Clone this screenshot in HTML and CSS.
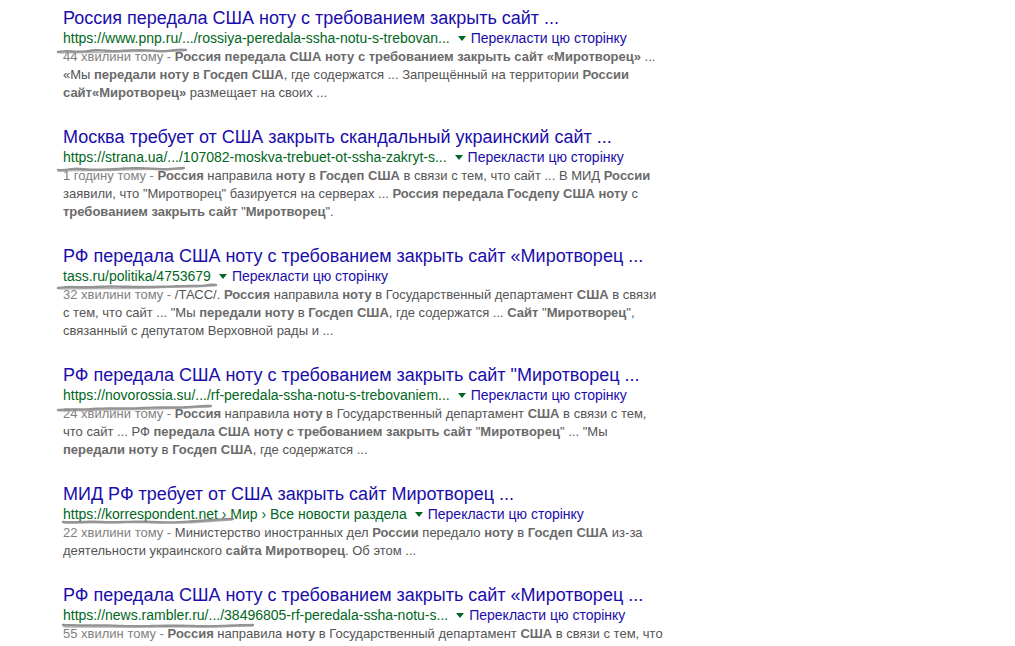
FILE: index.html
```
<html>
	<head>
		<meta charset="utf-8">
		<title> Результати пошуку </title>
		<link rel="stylesheet" href="styles.css">
	</head>
	<body>
		<div class="results">

			<div class="result">
				<a class="title">Россия передала США ноту с требованием закрыть сайт ...</a>
				<div class="url-line"><cite>https://www.pnp.ru/.../rossiya-peredala-ssha-notu-s-trebovan...</cite><span class="arrow"></span><a class="translate">Перекласти цю сторінку</a></div>
				<div class="snippet"><span class="date">44 хвилини тому - </span><b>Россия передала США ноту с требованием закрыть сайт «Миротворец»</b> ...<br>«Мы <b>передали ноту</b> в <b>Госдеп США</b>, где содержатся ... Запрещённый на территории <b>России</b><br><b>сайт«Миротворец»</b> размещает на своих ...</div>
				<svg class="scribble" style="left:-6px; top:39px" width="130" height="8" viewBox="0 0 130 8"><path d="M1 5 C12 3 20 6 32 4 S52 5 64 4 S88 3 100 4 S118 2 129 3"/><path class="thin" d="M3 6 C20 5 40 6 60 5 S100 4 127 4"/></svg>
			</div>

			<div class="result">
				<a class="title">Москва требует от США закрыть скандальный украинский сайт ...</a>
				<div class="url-line"><cite>https://strana.ua/.../107082-moskva-trebuet-ot-ssha-zakryt-s...</cite><span class="arrow"></span><a class="translate">Перекласти цю сторінку</a></div>
				<div class="snippet"><span class="date">1 годину тому - </span><b>Россия</b> направила <b>ноту</b> в <b>Госдеп США</b> в связи с тем, что сайт ... В МИД <b>России</b><br>заявили, что "Миротворец" базируется на серверах ... <b>Россия передала Госдепу США ноту</b> с<br><b>требованием закрыть сайт</b> "<b>Миротворец</b>".</div>
				<svg class="scribble" style="left:-6px; top:38px" width="128" height="8" viewBox="0 0 128 8"><path d="M1 5 C8 6 14 3 24 4 S46 5 60 4 S86 3 100 4 S118 3 127 3"/><path class="thin" d="M2 6 C22 5 44 6 66 5 S104 4 126 4"/></svg>
			</div>

			<div class="result">
				<a class="title">РФ передала США ноту с требованием закрыть сайт «Миротворец ...</a>
				<div class="url-line"><cite>tass.ru/politika/4753679</cite><span class="arrow"></span><a class="translate">Перекласти цю сторінку</a></div>
				<div class="snippet"><span class="date">32 хвилини тому - </span>/ТАСС/. <b>Россия</b> направила <b>ноту</b> в Государственный департамент <b>США</b> в связи<br>с тем, что сайт ... "Мы <b>передали ноту</b> в <b>Госдеп США</b>, где содержатся ... <b>Сайт</b> "<b>Миротворец</b>",<br>связанный с депутатом Верховной рады и ...</div>
				<svg class="scribble" style="left:-6px; top:36px" width="160" height="9" viewBox="0 0 160 9"><path d="M1 6 C14 4 26 6 40 5 S70 5 90 5 S120 4 136 4 S152 2 159 3"/><path class="thin" d="M3 7 C30 6 60 7 90 6 S140 5 157 4"/></svg>
			</div>

			<div class="result">
				<a class="title">РФ передала США ноту с требованием закрыть сайт "Миротворец ...</a>
				<div class="url-line"><cite>https://novorossia.su/.../rf-peredala-ssha-notu-s-trebovaniem...</cite><span class="arrow"></span><a class="translate">Перекласти цю сторінку</a></div>
				<div class="snippet"><span class="date">24 хвилини тому - </span><b>Россия</b> направила <b>ноту</b> в Государственный департамент <b>США</b> в связи с тем,<br>что сайт ... РФ <b>передала США ноту с требованием закрыть сайт</b> "<b>Миротворец</b>" ... "Мы<br><b>передали ноту</b> в <b>Госдеп США</b>, где содержатся ...</div>
				<svg class="scribble" style="left:-6px; top:39px" width="155" height="8" viewBox="0 0 155 8"><path d="M1 6 C10 5 22 6 36 5 S66 5 86 4 S120 4 134 3 S148 2 154 2"/><path class="thin" d="M3 7 C30 6 70 6 100 5 S140 3 152 3"/></svg>
			</div>

			<div class="result">
				<a class="title">МИД РФ требует от США закрыть сайт Миротворец ...</a>
				<div class="url-line"><cite>https://korrespondent.net › Мир › Все новости раздела</cite><span class="arrow"></span><a class="translate">Перекласти цю сторінку</a></div>
				<div class="snippet"><span class="date">22 хвилини тому - </span>Министерство иностранных дел <b>России</b> передало <b>ноту</b> в <b>Госдеп США</b> из-за<br>деятельности украинского <b>сайта Миротворец</b>. Об этом ...</div>
				<svg class="scribble" style="left:-1px; top:33px" width="172" height="8" viewBox="0 0 172 8"><path d="M1 5 C14 6 26 4 40 5 S70 4 90 5 S120 5 136 4 S158 2 171 2"/><path class="thin" d="M3 6 C30 6 70 5 100 6 S150 4 169 3"/></svg>
			</div>

			<div class="result">
				<a class="title">РФ передала США ноту с требованием закрыть сайт «Миротворец ...</a>
				<div class="url-line"><cite>https://news.rambler.ru/.../38496805-rf-peredala-ssha-notu-s...</cite><span class="arrow"></span><a class="translate">Перекласти цю сторінку</a></div>
				<div class="snippet"><span class="date">55 хвилин тому - </span><b>Россия</b> направила <b>ноту</b> в Государственный департамент <b>США</b> в связи с тем, что<br>сайт ... РФ <b>передала США ноту с требованием закрыть сайт</b> "<b>Миротворец</b>" ... "Мы</div>
				<svg class="scribble" style="left:-1px; top:36px" width="192" height="8" viewBox="0 0 192 8"><path d="M1 4 C20 5 40 4 60 5 S100 4 130 5 S170 4 191 4"/><path class="thin" d="M2 6 C40 6 90 6 130 6 S175 5 190 5"/></svg>
			</div>

		</div>
	</body>
</html>
```

FILE: styles.css
```
* {
	margin: 0;
	padding: 0;
}

body {
	font-family: "Liberation Sans", Arial, sans-serif;
	background: #fff;
	overflow: hidden;
}

.results {
	padding: 8px 0 0 63px;
}

.result {
	position: relative;
	margin-bottom: 25px;
}

.title {
	display: block;
	font-size: 18px;
	line-height: 20px;
	color: #1a0dab;
	white-space: nowrap;
}

.url-line {
	font-size: 14px;
	line-height: 20px;
	white-space: nowrap;
}

cite {
	font-style: normal;
	color: #006621;
}

.arrow {
	display: inline-block;
	vertical-align: middle;
	margin: -2px 5px 0 8px;
	border-style: solid;
	border-width: 5px 4px 0 4px;
	border-color: #006621 transparent transparent transparent;
}

.translate {
	color: #1a0dab;
}

.snippet {
	font-size: 13px;
	line-height: 18px;
	color: #545454;
	white-space: nowrap;
}

.snippet b {
	color: #6a6a6a;
}

.date {
	color: #808080;
}

/* pencil marks under the addresses */
.scribble {
	position: absolute;
	overflow: visible;
}

.scribble path {
	fill: none;
	stroke: #808080;
	stroke-width: 2.4;
	stroke-linecap: round;
	stroke-dasharray: 6 1 9 1 4 1;
	opacity: 0.85;
}

.scribble path.thin {
	stroke: #9a9a9a;
	stroke-width: 1.4;
	stroke-dasharray: none;
	opacity: 0.7;
}
```
